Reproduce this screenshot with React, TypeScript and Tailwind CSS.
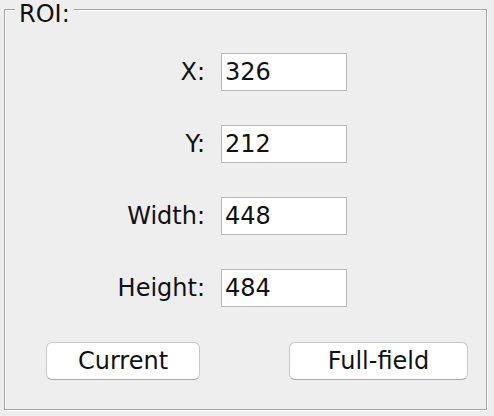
const rows = [
  { label: 'X:', value: '326' },
  { label: 'Y:', value: '212' },
  { label: 'Width:', value: '448' },
  { label: 'Height:', value: '484' },
];

export default function App() {
  return (
    <div
      className="relative w-[494px] h-[416px] bg-[#eeeeee] text-[#111111] text-[24px] leading-[24px] overflow-hidden"
      style={{ fontFamily: '"DejaVu Sans", "Liberation Sans", sans-serif' }}
    >
      {/* etched titled border */}
      <div className="ml-[4px] mt-[9px] w-[483px] h-[401px] border border-[#a4a4a4] shadow-[1px_1px_0_#ffffff,inset_1px_1px_0_#ffffff]">
        <div className="grid grid-cols-[200px_126px] gap-x-4 gap-y-[34px] pt-[43px]">
          {rows.map((row) => (
            <div key={row.label} className="contents">
              <div className="h-[38px] flex items-center justify-end">{row.label}</div>
              <div className="h-[38px] flex items-center bg-white border border-[#b9b9b9] px-[3px]">
                {row.value}
              </div>
            </div>
          ))}
        </div>

        <div className="flex gap-[89px] pl-[41px] mt-[35px]">
          <button className="w-[154px] h-[38px] bg-white rounded-[6px] border border-[#c8c8c8] border-b-[#a9a9a9] flex items-center justify-center">
            Current
          </button>
          <button className="w-[179px] h-[38px] bg-white rounded-[6px] border border-[#c8c8c8] border-b-[#a9a9a9] flex items-center justify-center">
            Full-field
          </button>
        </div>
      </div>

      {/* legend */}
      <div className="absolute left-[15px] top-0 px-[4px] leading-[28px] bg-[#eeeeee]">ROI:</div>
    </div>
  );
}
